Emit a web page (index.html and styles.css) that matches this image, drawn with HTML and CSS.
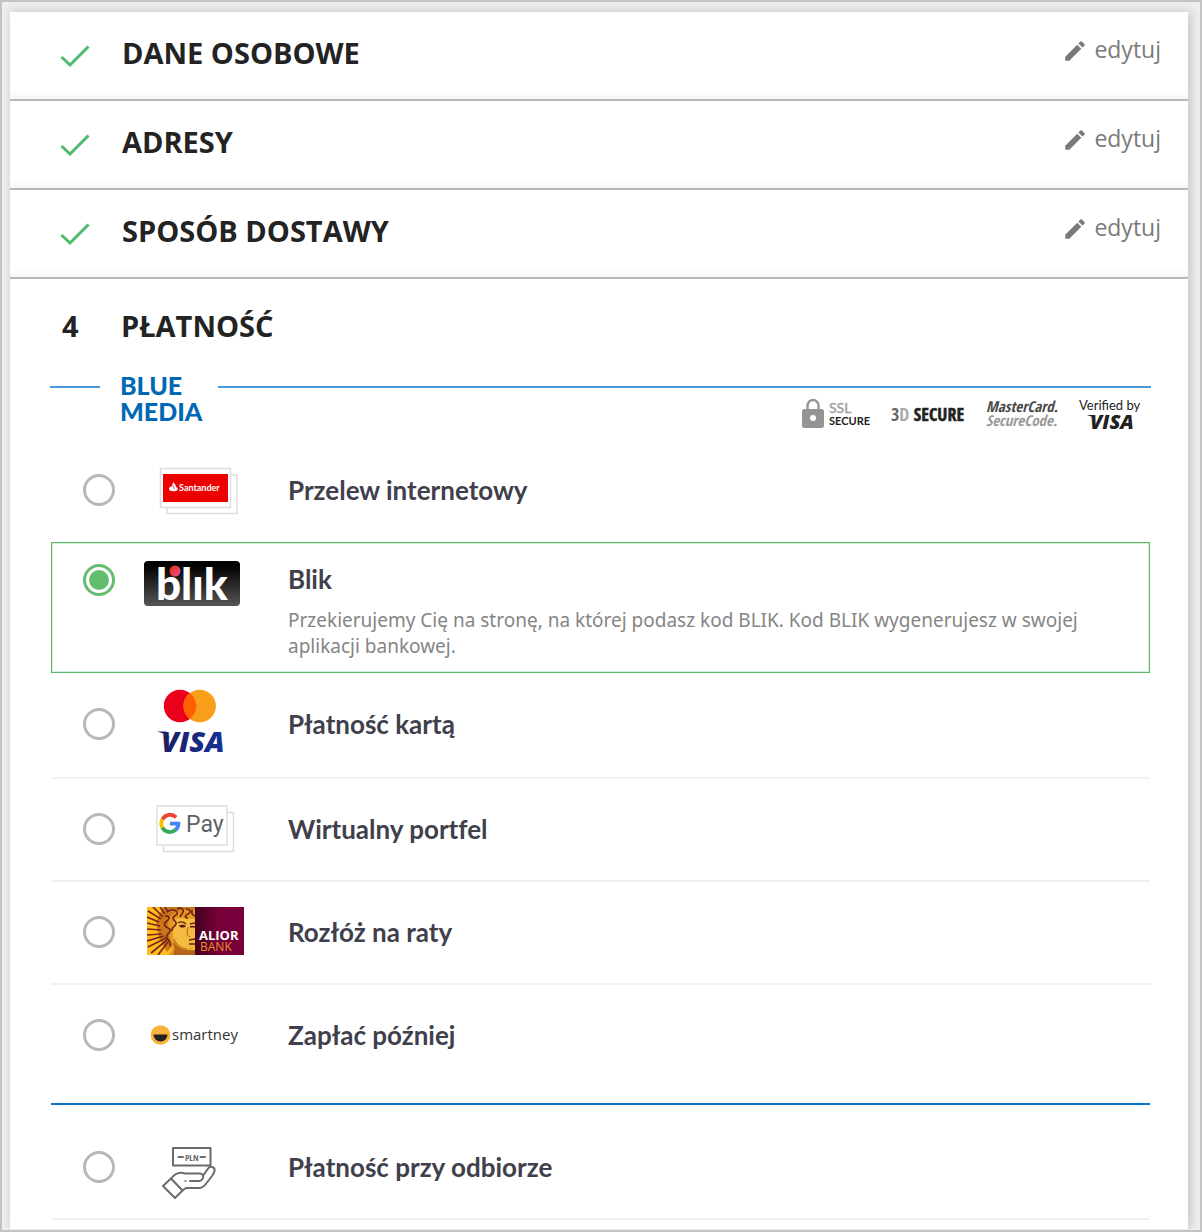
FILE: index.html
```html
<!DOCTYPE html>
<html lang="pl">
<head>
<meta charset="utf-8">
<meta name="viewport" content="width=device-width, initial-scale=1">
<title>Zamówienie – płatność</title>
<link rel="stylesheet" href="styles.css">
</head>
<body>
<main class="checkout">
  <section class="step">
    <svg class="step-tick" viewBox="0 0 30 24" aria-hidden="true"><path d="M1.500 13 10 21 28.500 2.500"/></svg>
    <h2 class="step-title">DANE OSOBOWE</h2>
    <a class="edit" href="#dane"><svg class="pencil" viewBox="0 0 24 24" aria-hidden="true"><path d="M3 17.250V21h3.750L17.810 9.940l-3.750-3.750L3 17.250zM20.710 7.040a1 1 0 0 0 0-1.410l-2.340-2.340a1 1 0 0 0-1.410 0l-1.830 1.830 3.750 3.750 1.830-1.830z"/></svg>edytuj</a>
  </section>
  <section class="step">
    <svg class="step-tick" viewBox="0 0 30 24" aria-hidden="true"><path d="M1.500 13 10 21 28.500 2.500"/></svg>
    <h2 class="step-title">ADRESY</h2>
    <a class="edit" href="#adresy"><svg class="pencil" viewBox="0 0 24 24" aria-hidden="true"><path d="M3 17.250V21h3.750L17.810 9.940l-3.750-3.750L3 17.250zM20.710 7.040a1 1 0 0 0 0-1.410l-2.340-2.340a1 1 0 0 0-1.410 0l-1.830 1.830 3.750 3.750 1.830-1.830z"/></svg>edytuj</a>
  </section>
  <section class="step">
    <svg class="step-tick" viewBox="0 0 30 24" aria-hidden="true"><path d="M1.500 13 10 21 28.500 2.500"/></svg>
    <h2 class="step-title">SPOSÓB DOSTAWY</h2>
    <a class="edit" href="#dostawa"><svg class="pencil" viewBox="0 0 24 24" aria-hidden="true"><path d="M3 17.250V21h3.750L17.810 9.940l-3.750-3.750L3 17.250zM20.710 7.040a1 1 0 0 0 0-1.410l-2.340-2.340a1 1 0 0 0-1.410 0l-1.830 1.830 3.750 3.750 1.830-1.830z"/></svg>edytuj</a>
  </section>

  <section class="payment">
    <h2 class="payment-head"><span class="step-number">4</span><span>PŁATNOŚĆ</span></h2>

    <div class="payment-body">
      <header class="brand">
        <div class="brand-rule"></div>
        <h3 class="brand-name">BLUE<br>MEDIA</h3>
        <div class="brand-rule brand-badges">
          <svg class="badge" width="70" height="32" viewBox="0 0 70 32" role="img" aria-label="SSL Secure">
            <path d="M6.500 13V7.500a5.500 5.500 0 0 1 11 0V13" fill="none" stroke="#999" stroke-width="2.500"/>
            <rect x="1" y="11" width="22" height="19" rx="2.500" fill="#949494"/>
            <circle cx="12" cy="20" r="3" fill="#fff"/>
            <text class="lato" x="28" y="15" font-size="14" fill="#a0a0a0" stroke="#a0a0a0" stroke-width="0.400">SSL</text>
            <text class="lato" x="28" y="27" font-size="11" font-weight="700" fill="#222">SECURE</text>
          </svg>
          <svg class="badge" width="75" height="32" viewBox="0 0 75 32" role="img" aria-label="3D Secure">
            <text class="narrow" y="23" font-size="18" font-weight="700"><tspan fill="#666">3</tspan><tspan fill="#aaa">D</tspan><tspan fill="#222" stroke="#222" stroke-width="0.500"> SECURE</tspan></text>
          </svg>
          <svg class="badge" width="73" height="32" viewBox="0 0 73 32" role="img" aria-label="MasterCard SecureCode">
            <text class="narrow" y="14" font-size="15" font-weight="700" font-style="italic" fill="#4a4a4a">MasterCard.</text>
            <text class="narrow" y="28" font-size="15" font-style="italic" fill="#999">SecureCode.</text>
          </svg>
          <svg class="badge" width="62" height="32" viewBox="0 0 62 32" role="img" aria-label="Verified by Visa">
            <text class="lato" x="0" y="12" font-size="13" fill="#222">Verified by</text>
            <path d="M8 17h7l1.500 3z" fill="#222"/>
            <text class="sans" x="11" y="31" font-size="20" font-weight="800" font-style="italic" fill="#222">VISA</text>
          </svg>
        </div>
      </header>

      <ul class="methods">
        <li class="method method-first">
          <input type="radio" name="method" id="m-przelew">
          <label for="m-przelew">
            <svg class="logo" width="104" height="52" viewBox="0 0 104 52" aria-hidden="true">
              <path d="M24 44V49.500H94V11H88" fill="#fff" stroke="#ddd" stroke-width="1.500"/>
              <rect x="17.500" y="4.500" width="70" height="39" fill="#fff" stroke="#ddd" stroke-width="1.500"/>
              <rect x="20" y="10" width="65" height="28" fill="#ec0000"/>
              <path d="M28.600 22.500c.100-1.700 1.200-2.300 1.700-4.500 1 1.700 2.800 2.400 2.500 5 2 .700 2.400 1.800 1.600 2.900-1.600 1.900-6.600 1.600-8 0-.900-1.300-.100-2.900 1.400-3.400z" fill="#fff"/>
              <path d="M29.500 21c.200 1.600 2 2.100 1.500 3.800" fill="none" stroke="#ec0000" stroke-width=".8"/>
              <text class="lato" x="36" y="27" font-size="9" font-weight="700" fill="#fff">Santander</text>
            </svg>
            <span class="method-text"><span class="method-name">Przelew internetowy</span></span>
          </label>
        </li>

        <li class="method method-selected">
          <input type="radio" name="method" id="m-blik" checked>
          <label for="m-blik">
            <svg class="logo" width="104" height="46" viewBox="0 0 104 46" aria-hidden="true">
              <defs>
                <linearGradient id="blik-bg" x1="0" y1="0" x2="0" y2="1"><stop offset="0.100" stop-color="#000"/><stop offset="1" stop-color="#555"/></linearGradient>
                <linearGradient id="blik-dot" x1="0" y1="0" x2="1" y2="1"><stop offset="0" stop-color="#e52f08"/><stop offset="1" stop-color="#e94f96"/></linearGradient>
              </defs>
              <rect x="1" y="1" width="96" height="45" rx="4" fill="url(#blik-bg)"/>
              <text class="lato" x="13" y="40" font-size="44" font-weight="900" fill="#fff">blık</text>
              <circle cx="32" cy="11" r="5.500" fill="url(#blik-dot)"/>
            </svg>
            <span class="method-text">
              <span class="method-name">Blik</span>
              <span class="method-note">Przekierujemy Cię na stronę, na której podasz kod BLIK. Kod BLIK wygenerujesz w swojej aplikacji bankowej.</span>
            </span>
          </label>
        </li>

        <li class="method method-card">
          <input type="radio" name="method" id="m-karta">
          <label for="m-karta">
            <svg class="logo" width="104" height="70" viewBox="0 0 104 70" aria-hidden="true">
              <defs><linearGradient id="visa" x1="0" x2="1"><stop offset="0" stop-color="#1a1f5c"/><stop offset="1" stop-color="#16319b"/></linearGradient></defs>
              <circle cx="37" cy="17" r="16.200" fill="#eb001b"/>
              <circle cx="56.700" cy="17" r="16.200" fill="#f79e1b"/>
              <path d="M46.850 4.100a16.200 16.200 0 0 1 0 25.800 16.200 16.200 0 0 1 0-25.800z" fill="#ff5f00"/>
              <path d="M14 42.500h9l4 7c-3-3.500-7-5.500-13-7z" fill="#1a1f5c"/>
              <text class="sans" x="18" y="63" font-size="29" font-weight="800" font-style="italic" fill="url(#visa)">VISA</text>
            </svg>
            <span class="method-text"><span class="method-name">Płatność kartą</span></span>
          </label>
        </li>

        <li class="method">
          <input type="radio" name="method" id="m-portfel">
          <label for="m-portfel">
            <svg class="logo" width="104" height="52" viewBox="0 0 104 52" aria-hidden="true">
              <path d="M20.500 42.500V48.500H90.500V9.500H85" fill="#fff" stroke="#ddd" stroke-width="1.500"/>
              <rect x="14" y="3" width="70" height="39" fill="#fff" stroke="#ddd" stroke-width="1.500"/>
              <g fill="none" stroke-width="3.800">
                <path d="M33.100 14.300A8.600 8.600 0 0 0 19.400 16.400" stroke="#ea4335"/>
                <path d="M19.500 16.200a8.600 8.600 0 0 0 0 8.600" stroke="#fbbc04"/>
                <path d="M19.400 24.600a8.600 8.600 0 0 0 13.400 2.100" stroke="#34a853"/>
                <path d="M32.600 26.900a8.600 8.600 0 0 0 2.800-6.200H27" stroke="#4285f4"/>
              </g>
              <text class="roboto" x="43" y="29" font-size="23" fill="#5f6368">Pay</text>
            </svg>
            <span class="method-text"><span class="method-name">Wirtualny portfel</span></span>
          </label>
        </li>

        <li class="method">
          <input type="radio" name="method" id="m-raty">
          <label for="m-raty">
            <svg class="logo" width="104" height="50" viewBox="0 1 104 50" aria-hidden="true">
              <defs>
                <linearGradient id="alior-bg" x1="0" x2="1"><stop offset="0" stop-color="#43001f"/><stop offset=".5" stop-color="#78003a"/></linearGradient>
                <clipPath id="alior-clip"><rect x="4" y="1" width="48" height="48"/></clipPath>
              </defs>
              <rect x="52" y="1" width="49" height="48" fill="url(#alior-bg)"/>
              <g clip-path="url(#alior-clip)">
                <rect x="4" y="1" width="48" height="48" fill="#fdbd1c"/>
                <path d="M20 1h32v12H38l-8 12 2 12-8 9-8-14-3-16z" fill="#c9771b"/>
                <g stroke="#7d2418" stroke-width="1.700">
                  <path d="M10 1l10 10M5 5l13 8M4 11l12 5M4 17l13 3M4 23l14 1M4 29l15-1M4 35l17-5M5 41l18-9M8 47l16-13M15 49l10-13M17 1l5 7M22 1l3 5"/>
                </g>
                <path d="M25 49c6-6 5-10 2-16l-2-15C26 8 33 3 52 4v35c-4 8-12 6-16 10z" fill="#e39a20"/>
                <path d="M31 14c5-3 10-2 21-1v26c-3 4-8 6-13 3l-9-9z" fill="#f5bb40"/>
                <g fill="none" stroke="#792018" stroke-width="1.700">
                  <path d="M22 10c4-1 5 2 3 4s-5 3-3 6 6 1 5 5-5 3-3 7 4 3 3 8M24 6c4-3 8-3 10 0s-4 3-4 6 4 3 3 6-5 3-4 7M34 3c4-2 7 0 6 3s-4 4-2 5M43 3c5 0 5 4 2 5s-4 4 0 4M49 4c0 3-1 4 3 6"/>
                </g>
                <path d="M35 17c3-2 6-1 8 1M47 18l5-1M46 34l6-1M46 38h6" fill="none" stroke="#6b2015" stroke-width="1.300"/>
                <path d="M36 20c3-2 5-1 7 0-2 2-5 2-7 0zM47 20h5v1.500h-5z" fill="#591411"/>
                <path d="M45 21l-1 8 3 2M31 33c2 6 7 9 13 10M30 37c2 5 6 8 11 10" fill="none" stroke="#b06a1c"/>
                <path d="M30 49c2-6 2-8 1-13 4 6 9 9 21 8v5z" fill="#b5651b"/>
              </g>
              <text class="sans" x="56" y="34" font-size="13" font-weight="700" fill="#fff">ALIOR</text>
              <text class="sans" x="57" y="45" font-size="12" fill="#e8941f">BANK</text>
            </svg>
            <span class="method-text"><span class="method-name">Rozłóż na raty</span></span>
          </label>
        </li>

        <li class="method method-last">
          <input type="radio" name="method" id="m-pozniej">
          <label for="m-pozniej">
            <svg class="logo" width="104" height="30" viewBox="0 0 104 30" aria-hidden="true">
              <circle cx="17.500" cy="15" r="9.800" fill="#fbb03b"/>
              <path d="M10.500 14.500h14a7 7 0 0 1-14 0z" fill="#222"/>
              <text class="sans" x="29" y="20" font-size="15" fill="#333">smartney</text>
            </svg>
            <span class="method-text"><span class="method-name">Zapłać później</span></span>
          </label>
        </li>
      </ul>

      <ul class="methods methods-other">
        <li class="method">
          <input type="radio" name="method" id="m-odbior">
          <label for="m-odbior">
            <svg class="logo" width="104" height="62" viewBox="0 -3 104 62" aria-hidden="true">
              <g fill="none" stroke="#6b6b6b" stroke-width="2" stroke-linejoin="round" stroke-linecap="round">
                <rect x="30" y="9" width="37.500" height="17.500"/>
                <path d="M35.500 18h4.500M57.500 18h4.500"/>
                <path d="M28 39.500 20 47l12 12 7.500-7.500z"/>
                <path d="M28 39.500c4-5 9-7 14-5h15c3 0 3.500 3 3 4.500-1 2.500-3 3-4.500 3H47M60.500 36l5-7c2-2.500 7-1 6 3-.500 2-1.500 3.500-2.500 5l-7 9c-2 2.500-3.500 3-6 3H43l-3.500 2.500"/>
              </g>
              <circle cx="42.500" cy="42" r="1" fill="#6b6b6b"/>
              <text class="narrow" x="42" y="21.500" font-size="9" font-weight="700" fill="#6b6b6b">PLN</text>
            </svg>
            <span class="method-text"><span class="method-name">Płatność przy odbiorze</span></span>
          </label>
        </li>
      </ul>
    </div>
  </section>
</main>
</body>
</html>
```
FILE: styles.css
```css
* { box-sizing: border-box; }

body {
  margin: 0;
  min-height: 100vh;
  padding: 10px 12px 0 8px;
  border: 2px solid #c3c3c3;
  background: #eee;
  font-family: "Open Sans", "Noto Sans", sans-serif;
  color: #232323;
}

h2, h3, ul { margin: 0; padding: 0; }
ul { list-style: none; }

.checkout {
  background: #fff;
  box-shadow: 2px 0 10px rgba(0, 0, 0, 0.2);
  clip-path: inset(-10px -12px 0 -8px);
}

/* Completed steps */
.step {
  display: flex;
  align-items: center;
  min-height: 89px;
  padding: 0 27px 6px 50px;
  border-bottom: 2px solid #b8b8b8;
  box-shadow: inset 0 -8px 8px -6px rgba(0, 0, 0, 0.06);
}

.step-tick {
  width: 30px;
  height: 24px;
  margin: 6px 32px 0 0;
  fill: none;
  stroke: #4dbb6d;
  stroke-width: 3;
}

.step-title,
.payment-head {
  font-size: 29px;
  line-height: 40px;
  font-weight: 700;
}

.edit {
  display: flex;
  align-items: center;
  gap: 6px;
  margin-left: auto;
  padding-bottom: 8px;
  font-size: 23px;
  line-height: 32px;
  color: #7a7a7a;
  text-decoration: none;
}

.pencil {
  width: 26px;
  height: 26px;
  margin-top: 4px;
  fill: #7a7a7a;
}

/* Current step */
.payment-head {
  display: flex;
  align-items: center;
  height: 93px;
  padding-left: 52px;
}

.step-number { width: 59px; }

.payment-body { padding: 0 37px 9px 40px; }

.brand {
  display: grid;
  grid-template-columns: 50px 78px 1fr;
  column-gap: 20px;
  min-height: 66px;
}

.brand-rule {
  margin-top: 14px;
  border-top: 2px solid #4c97d8;
}

.brand-name {
  font: 900 25px/26px Lato, sans-serif;
  color: #0069b4;
}

.brand-badges {
  display: flex;
  justify-content: flex-end;
  align-items: flex-start;
  gap: 20px;
  padding: 10px 10px 0 0;
}

.badge { flex: none; overflow: visible; }

.lato { font-family: Lato, sans-serif; }
.sans { font-family: "Open Sans", sans-serif; }
.roboto { font-family: Roboto, sans-serif; }
.narrow { font-family: "Liberation Sans Narrow", "Open Sans Condensed", "Roboto Condensed", "Liberation Sans", sans-serif; }

/* Payment methods */
.methods { padding: 0 1px; }

.method {
  display: flex;
  align-items: center;
  gap: 28px;
  min-height: 103px;
  padding: 0 32px 2px;
  border-bottom: 2px solid #f1f1f1;
}

.method-first {
  min-height: 104px;
  padding-bottom: 0;
  border-bottom: 0;
}

.method-selected {
  align-items: flex-start;
  min-height: 131px;
  padding: 17px 31px 0;
  border: 1px solid #5cb867;
  box-shadow: inset 0 0 0 1px #d5efd8;
}

.method-card { min-height: 106px; }

.method-last {
  min-height: 118px;
  padding-bottom: 18px;
  border-bottom: 0;
}

.methods-other {
  margin: 0 1px;
  padding: 12px 0 0;
  border-top: 2px solid #0f77cd;
}

.method input {
  appearance: none;
  flex: none;
  width: 32px;
  height: 32px;
  margin: 0;
  padding: 3px;
  border: 3px solid #b8b8b8;
  border-radius: 50%;
  background: #fff;
}

.method input:checked {
  margin-top: 4px;
  border-color: #64bc6d;
  background: #64bc6d content-box;
}

.method label {
  display: flex;
  flex: 1;
  align-items: center;
  gap: 41px;
}

.method-selected label { align-items: flex-start; }

.logo { flex: none; overflow: visible; }

.method-text { flex: 1; }

.method-name,
.method-note { display: block; }

.method-name {
  font: 700 26px/38px Lato, sans-serif;
  font-variant-ligatures: none;
  color: #40404c;
}

.method-note {
  margin-top: 9px;
  font-family: "Noto Sans", sans-serif;
  font-size: 19px;
  line-height: 26px;
  color: #858585;
}
```
